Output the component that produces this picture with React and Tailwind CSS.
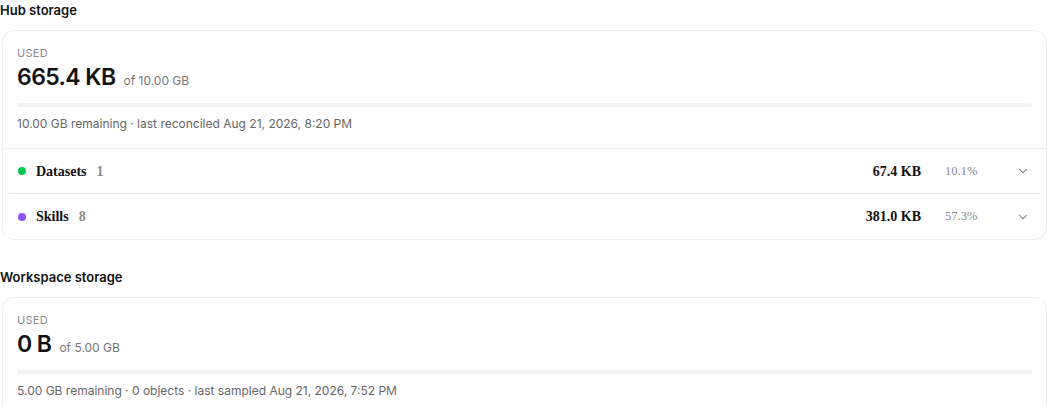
import { ChevronDown } from "lucide-react";

const sans = { fontFamily: "Inter, 'Noto Sans', sans-serif" };
const serif = { fontFamily: "'Liberation Serif', 'DejaVu Serif', serif" };

const UsageSummary = ({ used, total, note }) => (
  <div className="px-[14px] pt-[15px] pb-4">
    <div className="text-[11px] uppercase leading-[14px] tracking-wide text-[#8a8a8a]">Used</div>
    <div className="mt-[3px] flex items-baseline gap-2">
      <span className="text-[23px] font-semibold leading-[28px] tracking-tight text-[#111]">{used}</span>
      <span className="text-[12px] text-[#777]">of {total}</span>
    </div>
    <div className="mt-[12px] h-1 w-full rounded-full bg-[#f3f3f3]" />
    <div className="mt-[9px] text-[12px] leading-4 text-[#666]">{note}</div>
  </div>
);

const CategoryRow = ({ color, name, count, size, pct, last }) => (
  <div className={"flex h-[45px] items-center pl-[9px] pr-[10px] " + (last ? "" : "border-b border-[#e6e6e6]")}>
    <span className={"h-2 w-2 rounded-full " + color} />
    <span className="ml-[10px] text-[14px] font-bold text-[#111]" style={serif}>
      {name}
    </span>
    <span className="ml-[10px] text-[14px] font-semibold text-[#8a8a8a]" style={serif}>
      {count}
    </span>
    <span className="ml-auto text-[14px] font-bold text-[#111]" style={serif}>
      {size}
    </span>
    <span className="ml-[24px] w-[71px] text-[12.5px] text-[#8a8a8a]" style={serif}>
      {pct}
    </span>
    <ChevronDown size={14} strokeWidth={1.75} className="text-[#666]" />
  </div>
);

export default function App() {
  return (
    <div className="min-h-screen w-[1050px] bg-white" style={sans}>
      <h2 className="text-[13px] font-semibold leading-5 text-[#111]">Hub storage</h2>
      <div className="mt-[10px] ml-[2px] mr-[3px] rounded-xl border border-[#f0f0f0] bg-white">
        <UsageSummary
          used="665.4 KB"
          total="10.00 GB"
          note="10.00 GB remaining · last reconciled Aug 21, 2026, 8:20 PM"
        />
        <div className="border-t border-[#f0f0f0] px-1.5">
          <CategoryRow color="bg-green-500" name="Datasets" count="1" size="67.4 KB" pct="10.1%" />
          <CategoryRow color="bg-violet-500" name="Skills" count="8" size="381.0 KB" pct="57.3%" last />
        </div>
      </div>

      <h2 className="mt-[27px] text-[13px] font-semibold leading-5 text-[#111]">Workspace storage</h2>
      <div className="mt-[10px] ml-[2px] mr-[3px] rounded-xl border border-[#f0f0f0] bg-white">
        <UsageSummary
          used="0 B"
          total="5.00 GB"
          note="5.00 GB remaining · 0 objects · last sampled Aug 21, 2026, 7:52 PM"
        />
      </div>
    </div>
  );
}
